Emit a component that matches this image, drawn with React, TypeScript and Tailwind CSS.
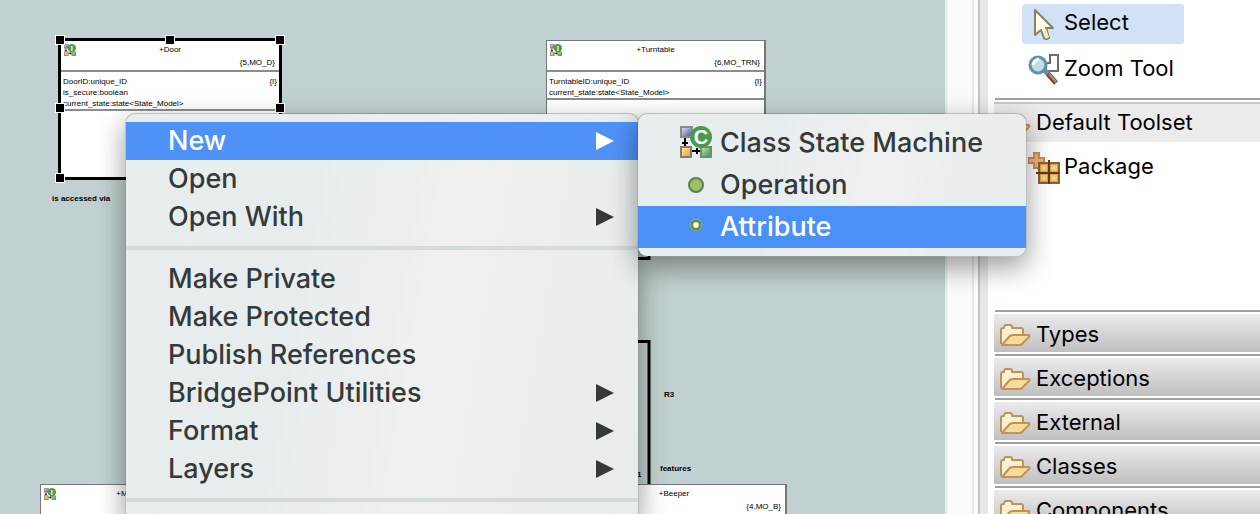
import React from "react";

function StateMachineIcon({ letter, className }: { letter: string; className: string }) {
  return (
    <svg viewBox="0 0 32 32" className={className} aria-hidden="true">
      <defs>
        <linearGradient id={"p" + letter} x1="0" y1="0" x2="1" y2="1">
          <stop offset="0" stopColor="#e9e9fa" />
          <stop offset="1" stopColor="#4c4c92" />
        </linearGradient>
        <linearGradient id={"o" + letter} x1="0" y1="0" x2="1" y2="1">
          <stop offset="0" stopColor="#fff0b0" />
          <stop offset="1" stopColor="#eb9a18" />
        </linearGradient>
        <linearGradient id={"g" + letter} x1="0" y1="0" x2="1" y2="1">
          <stop offset="0" stopColor="#c2eac2" />
          <stop offset="1" stopColor="#3c8a44" />
        </linearGradient>
      </defs>
      <rect x="1" y="1" width="11" height="10" fill={`url(#p${letter})`} stroke="#8a8a8a" strokeWidth="2" />
      <rect x="1" y="21" width="10" height="10" fill={`url(#o${letter})`} stroke="#8b7a68" strokeWidth="2" />
      <rect x="21" y="21" width="10" height="10" fill={`url(#g${letter})`} stroke="#6c8f6c" strokeWidth="2" />
      <path d="M5 12v8M2 17h6M12 25h8M17 22v6" stroke="#000" strokeWidth="2" fill="none" />
      <circle cx="21" cy="11" r="11" fill="#4b9a4f" />
      <text x="21" y="18" textAnchor="middle" fontSize="20" fontWeight="700" fill="#fff" fontFamily="Liberation Sans, sans-serif">
        {letter}
      </text>
    </svg>
  );
}

function FolderIcon() {
  return (
    <svg viewBox="0 0 32 32" className="h-8 w-8 shrink-0" aria-hidden="true">
      <path d="M2 27V13q0-2 2-2h1q0-3 2-3h4q2 0 2 2v1h9q2 0 2 2v4" fill="#fbf0cd" stroke="#c0925a" strokeWidth="2" strokeLinejoin="round" />
      <path d="M6 11h6" stroke="#fffaf0" strokeWidth="2" />
      <path d="M3 28L9 21q2-3 5-3h15q2 0 1 2l-7 7q-1 1-3 1z" fill="#f6dc98" stroke="#c0925a" strokeWidth="2" strokeLinejoin="round" />
    </svg>
  );
}

function CursorIcon() {
  return (
    <svg viewBox="0 0 32 32" className="h-8 w-8 shrink-0" aria-hidden="true">
      <path d="M7 2V27L13 22L16 30Q18 32 21 30L18 20H25Z" fill="#fffce6" stroke="#85816d" strokeWidth="2" strokeLinejoin="round" />
      <path d="M18 21l3 8-3 2-3-8z" fill="#f5eeb4" />
    </svg>
  );
}

function ZoomIcon() {
  return (
    <svg viewBox="0 0 32 32" className="h-8 w-8 shrink-0" aria-hidden="true">
      <path d="M18 17V9h4V1h8v16H18" fill="#fff" stroke="#6d6d6d" strokeWidth="2" />
      <path d="M16 16l5 5" stroke="#6f8d9b" strokeWidth="5" />
      <path d="M20 20l8 9" stroke="#6b4a3b" strokeWidth="5" />
      <path d="M21 20l7 8" stroke="#bd8a6c" strokeWidth="2" />
      <circle cx="10" cy="11" r="8" fill="#c3dde7" stroke="#5d92a8" strokeWidth="3" />
      <path d="M5 11q1-5 6-6" stroke="#fff" strokeWidth="3" fill="none" />
    </svg>
  );
}

function PackageIcon() {
  return (
    <svg viewBox="0 0 32 32" className="h-8 w-8 shrink-0" aria-hidden="true">
      <path d="M6 1h5v5h5v5h-5v5H6v-5H0V6h6z" fill="#f1b57c" stroke="#cf8c52" strokeWidth="2" />
      <rect x="11" y="11" width="20" height="20" fill="#e0a249" stroke="#8a6132" strokeWidth="2" />
      <path d="M14 14h4v4h-4zM24 14h4v4h-4zM14 24h4v4h-4zM24 24h4v4h-4z" fill="#ffeaa8" stroke="#f6c970" strokeWidth="2" />
      <path d="M21 8v24M8 21h24" stroke="#5d3c1a" strokeWidth="2" />
    </svg>
  );
}

function OperationIcon() {
  return (
    <svg viewBox="0 0 32 32" className="h-8 w-8" aria-hidden="true">
      <circle cx="16" cy="17" r="7" fill="#a3bd66" stroke="#4f8352" strokeWidth="2" />
    </svg>
  );
}

function AttributeIcon() {
  return (
    <svg viewBox="0 0 32 32" className="h-8 w-8" aria-hidden="true">
      <circle cx="16" cy="15" r="6" fill="#a5cdb0" />
      <circle cx="16" cy="15" r="4" fill="#fff" stroke="#5f8a3c" strokeWidth="3" />
      <circle cx="16" cy="15" r="3" fill="#fff" stroke="#b9c77c" strokeWidth="1" />
    </svg>
  );
}

function ClassBox({ name, tag, attributes = [], className }: { name: string; tag: string; attributes?: string[]; className: string }) {
  return (
    <section className={"absolute bg-white text-[8px] leading-[12px] text-black " + className}>
      <header className="grid h-[31px] grid-cols-[12px_1fr_12px] border-b-2 border-[#8c8c8c] px-[3px] pt-[3px]">
        <StateMachineIcon letter="I" className="h-3 w-3" />
        <div className="text-center">{name}</div>
        <div className="col-span-3 pr-px text-right">{tag}</div>
      </header>
      {attributes.length > 0 && (
        <ul className="border-b-2 border-[#8c8c8c] px-[2px] pt-1 leading-[11px]">
          {attributes.map((a, i) => (
            <li key={a} className="flex justify-between">
              <span>{a}</span>
              {i === 0 && <span>{"{I}"}</span>}
            </li>
          ))}
        </ul>
      )}
    </section>
  );
}

const handle = "absolute h-[10px] w-[10px] border border-white bg-black ";

function Diagram() {
  return (
    <main className="relative min-w-0 flex-1 overflow-hidden bg-[#c1d0d0] font-['Liberation_Sans',sans-serif]">
      <ClassBox
        name="+Door"
        tag="{5,MO_D}"
        attributes={["DoorID:unique_ID", "is_secure:boolean", "current_state:state<State_Model>"]}
        className="top-[38px] left-[58px] h-[142px] w-[224px] border-3 border-black"
      />
      <i className={handle + "top-[35px] left-[55px]"} />
      <i className={handle + "top-[35px] left-[165px]"} />
      <i className={handle + "top-[35px] left-[275px]"} />
      <i className={handle + "top-[103px] left-[55px]"} />
      <i className={handle + "top-[103px] left-[275px]"} />
      <i className={handle + "top-[173px] left-[55px]"} />
      <ClassBox
        name="+Turntable"
        tag="{6,MO_TRN}"
        attributes={["TurntableID:unique_ID", "current_state:state<State_Model>"]}
        className="top-[40px] left-[546px] h-[142px] w-[220px] border border-r-2 border-[#777]"
      />
      <svg className="absolute top-[240px] left-[620px] h-[250px] w-[40px]" viewBox="0 0 40 250" aria-hidden="true">
        <path d="M0 18.500h29V0M0 101.500h29V250" fill="none" stroke="#000" strokeWidth="3" />
      </svg>
      <span className="absolute top-[193px] left-[52px] text-[8px] leading-3 font-bold">is accessed via</span>
      <span className="absolute top-[389px] left-[664px] text-[8px] leading-3 font-bold">R3</span>
      <span className="absolute top-[463px] left-[660px] text-[8px] leading-3 font-bold">features</span>
      <span className="absolute top-[469px] left-[637px] text-[8px] leading-3 font-bold">1</span>
      <ClassBox name="+M" tag="" className="top-[484px] left-[40px] h-[142px] w-[164px] border border-[#777]" />
      <ClassBox name="+Beeper" tag="{4,MO_B}" className="top-[484px] left-[562px] h-[142px] w-[225px] border border-r-2 border-[#777]" />
    </main>
  );
}

const panel =
  "absolute rounded-[10px] border border-black/25 bg-[linear-gradient(100deg,#e8eded_0%,#e7eded_35%,#f0f0f0_60%,#e7ecec_100%)] bg-clip-padding text-[27px] font-medium text-[#343a3a] shadow-[0_10px_28px_rgba(0,0,0,0.4)] ";

function MenuItem({ label, submenu, active }: { label: string; submenu?: boolean; active?: boolean }) {
  return (
    <li>
      <button
        type="button"
        role="menuitem"
        className={"flex h-[38px] w-full items-center justify-between pr-6 pl-[42px] text-left " + (active ? "bg-[#4f92f7] text-white" : "")}
      >
        <span>{label}</span>
        {submenu && (
          <svg viewBox="0 0 18 18" className="h-[18px] w-[18px]" aria-hidden="true">
            <path d="M0 0L18 9L0 18Z" fill="currentColor" />
          </svg>
        )}
      </button>
    </li>
  );
}

function MenuSeparator() {
  return <li role="separator" className="my-[10px] h-1 bg-[#d5dadb]" />;
}

function ContextMenu() {
  return (
    <ul role="menu" className={panel + "top-[113px] left-[125px] w-[514px] py-2 leading-9"}>
      <MenuItem label="New" submenu active />
      <MenuItem label="Open" />
      <MenuItem label="Open With" submenu />
      <MenuSeparator />
      <MenuItem label="Make Private" />
      <MenuItem label="Make Protected" />
      <MenuItem label="Publish References" />
      <MenuItem label="BridgePoint Utilities" submenu />
      <MenuItem label="Format" submenu />
      <MenuItem label="Layers" submenu />
      <MenuSeparator />
    </ul>
  );
}

function SubMenuItem({ label, icon, active }: { label: string; icon: React.ReactNode; active?: boolean }) {
  return (
    <li>
      <button
        type="button"
        role="menuitem"
        className={"flex h-[42px] w-full items-center gap-2 pb-[2px] pl-[42px] text-left " + (active ? "bg-[#4b90f6] text-white" : "")}
      >
        {icon}
        <span className="pt-[2px]">{label}</span>
      </button>
    </li>
  );
}

function NewSubMenu() {
  return (
    <ul role="menu" className={panel + "top-[113px] left-[637px] w-[390px] py-2 leading-9"}>
      <SubMenuItem label="Class State Machine" icon={<StateMachineIcon letter="C" className="h-8 w-8" />} />
      <SubMenuItem label="Operation" icon={<OperationIcon />} />
      <SubMenuItem label="Attribute" icon={<AttributeIcon />} active />
    </ul>
  );
}

function Tool({ label, icon, active }: { label: string; icon: React.ReactNode; active?: boolean }) {
  return (
    <button
      type="button"
      className={"flex h-10 w-[162px] items-center gap-1 rounded-[3px] pl-[6px] text-left whitespace-nowrap " + (active ? "bg-[#d1e1f7]" : "")}
    >
      {icon}
      <span className="pb-1">{label}</span>
    </button>
  );
}

function Drawer({ label, open }: { label: string; open?: boolean }) {
  return (
    <div className="pb-[2px]">
      <div className="ml-px h-[2px] bg-[#a0a0a0]" />
      <button
        type="button"
        className={
          "mt-[2px] flex w-full items-center gap-[5px] pl-[5px] text-left " +
          (open ? "h-10 border-t-2 border-[#c8c8c8] bg-[#ebebeb]" : "h-[38px] bg-linear-to-b from-[#ebebeb] to-[#bfbfbf]")
        }
      >
        <FolderIcon />
        <span className={open ? "pb-[2px]" : "pt-[2px]"}>{label}</span>
      </button>
    </div>
  );
}

function Palette() {
  return (
    <aside className="flex w-[315px] shrink-0 bg-white text-[22px] leading-[30px] text-black">
      <div className="w-[29px] shrink-0 border-x-2 border-[#e9e9e9] bg-[#fafafa]" />
      <div className="ml-1 w-[10px] shrink-0 border-l-2 border-[#c4c5be] bg-[#e8e8e8]" />
      <div className="ml-[6px] min-w-0 flex-1">
        <div className="flex flex-col gap-[6px] pt-1 pb-2 pl-7">
          <Tool label="Select" icon={<CursorIcon />} active />
          <Tool label="Zoom Tool" icon={<ZoomIcon />} />
        </div>
        <Drawer label="Default Toolset" open />
        <div className="min-h-[166px] pt-1 pl-7">
          <Tool label="Package" icon={<PackageIcon />} />
        </div>
        <Drawer label="Types" />
        <Drawer label="Exceptions" />
        <Drawer label="External" />
        <Drawer label="Classes" />
        <Drawer label="Components" />
      </div>
    </aside>
  );
}

export default function App() {
  return (
    <div className="relative flex h-screen overflow-hidden bg-white font-['Inter',sans-serif]">
      <Diagram />
      <Palette />
      <ContextMenu />
      <NewSubMenu />
    </div>
  );
}
